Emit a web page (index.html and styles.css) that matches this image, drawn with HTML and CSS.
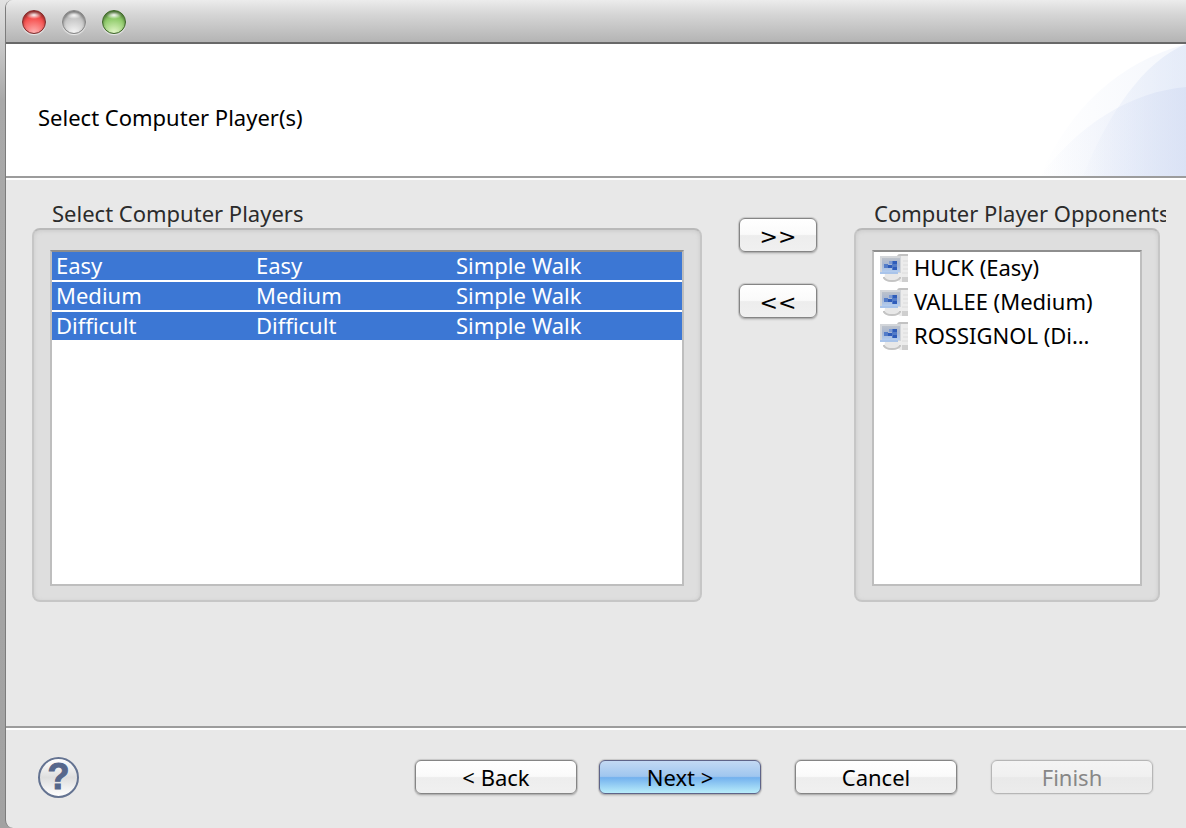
FILE: index.html
```html
<!DOCTYPE html>
<html lang="en">
<head>
<meta charset="utf-8">
<meta name="viewport" content="width=device-width, initial-scale=1">
<title>Select Computer Player(s)</title>
<link rel="stylesheet" href="styles.css">
</head>
<body>
<svg class="defs" aria-hidden="true">
  <defs>
    <linearGradient id="screen" x1="0" y1="0" x2="0" y2="1">
      <stop offset="0" stop-color="#bcc2cb"/>
      <stop offset=".5" stop-color="#a6b6d2"/>
      <stop offset="1" stop-color="#b3cdf0"/>
    </linearGradient>
    <filter id="soft"><feGaussianBlur stdDeviation=".7"/></filter>
    <symbol id="computer" viewBox="0 0 28 28">
      <path d="M18 25V2q0-2 2-2h8v28h-7q-3 0-3-3z" fill="#ececec"/>
      <path d="M18 5V3q0-2 2-2h8" fill="none" stroke="#c2c2c2" stroke-width="2"/>
      <path d="M23 7h5M23 11h5M23 15h5M22 19h6" stroke="#dcdcdc"/>
      <path d="M22 23h6v5h-6z" fill="#cfcfcf"/>
      <path d="M5 20h13l1 5q-1 3-7 3t-8-3z" fill="#e8e8e8"/>
      <path d="M4 23v1q2 3 8 3t8-3v-1" fill="none" stroke="#c4c4c4" stroke-width="2"/>
      <path d="M0 2h21v17H0z" fill="#d3d6da"/>
      <path d="M2 4h18v14H2z" fill="url(#screen)"/>
      <path d="M0 19h18" stroke="#a9c4ea" stroke-width="2"/>
      <g filter="url(#soft)">
        <path d="M4 10h4v4H4zM12 7h5v9h-5z" fill="#527bc8"/>
        <path d="M8 11h4v3H8zM13 7h4v3h-4zM13 13h4v3h-4z" fill="#2f5cba"/>
        <path d="M9 7h3v3H9z" fill="#7d9bd3"/>
      </g>
    </symbol>
  </defs>
</svg>
<div class="window">
  <div class="titlebar">
    <button class="light light-close" type="button" aria-label="Close"></button>
    <button class="light light-minimize" type="button" aria-label="Minimize"></button>
    <button class="light light-zoom" type="button" aria-label="Zoom"></button>
  </div>

  <header class="banner">
    <h1 class="banner-title">Select Computer Player(s)</h1>
    <svg class="banner-art" viewBox="0 0 148 132" aria-hidden="true">
      <defs>
        <linearGradient id="outer" gradientUnits="userSpaceOnUse" x1="0" y1="0" x2="148" y2="0">
          <stop offset="0" stop-color="#dbe4f6" stop-opacity="0"/>
          <stop offset="1" stop-color="#dbe4f6" stop-opacity=".3"/>
        </linearGradient>
        <linearGradient id="inner" gradientUnits="userSpaceOnUse" x1="40" y1="0" x2="148" y2="0">
          <stop offset="0" stop-color="#dbe4f6" stop-opacity="0"/>
          <stop offset=".4" stop-color="#dbe4f6" stop-opacity=".3"/>
          <stop offset="1" stop-color="#dbe4f6" stop-opacity=".6"/>
        </linearGradient>
        <linearGradient id="low" gradientUnits="userSpaceOnUse" x1="0" y1="0" x2="148" y2="0">
          <stop offset="0" stop-color="#d5def4" stop-opacity="0"/>
          <stop offset=".6" stop-color="#d5def4" stop-opacity=".3"/>
          <stop offset="1" stop-color="#d5def4" stop-opacity=".65"/>
        </linearGradient>
      </defs>
      <path d="M2 132Q48 28 148 0V132z" fill="url(#outer)"/>
      <path d="M45 132C70 70 105 18 148 0V132z" fill="url(#inner)"/>
      <path d="M2 132C42 80 92 48 148 43V132z" fill="url(#low)"/>
    </svg>
  </header>

  <main class="content">
    <section class="group" aria-labelledby="players-label">
      <h2 class="group-label" id="players-label">Select Computer Players</h2>
      <div class="well">
        <div class="list">
          <table class="players" aria-labelledby="players-label">
            <colgroup><col class="col-name"><col class="col-level"><col></colgroup>
            <tbody>
              <tr><td>Easy</td><td>Easy</td><td>Simple Walk</td></tr>
              <tr><td>Medium</td><td>Medium</td><td>Simple Walk</td></tr>
              <tr><td>Difficult</td><td>Difficult</td><td>Simple Walk</td></tr>
            </tbody>
          </table>
        </div>
      </div>
    </section>

    <div class="transfer">
      <button class="btn btn-arrows" type="button">&gt;&gt;</button>
      <button class="btn btn-arrows" type="button">&lt;&lt;</button>
    </div>

    <section class="group" aria-labelledby="opponents-label">
      <h2 class="group-label" id="opponents-label">Computer Player Opponents</h2>
      <div class="well">
        <ul class="list opponents">
          <li><svg class="icon" aria-hidden="true"><use href="#computer"/></svg><span>HUCK (Easy)</span></li>
          <li><svg class="icon" aria-hidden="true"><use href="#computer"/></svg><span>VALLEE (Medium)</span></li>
          <li><svg class="icon" aria-hidden="true"><use href="#computer"/></svg><span>ROSSIGNOL (Di…</span></li>
        </ul>
      </div>
    </section>
  </main>

  <footer class="footer">
    <button class="help" type="button" aria-label="Help">?</button>
    <div class="actions">
      <div class="steps">
        <button class="btn btn-wide" type="button">&lt; Back</button>
        <button class="btn btn-wide btn-default" type="button">Next &gt;</button>
      </div>
      <button class="btn btn-wide" type="button">Cancel</button>
      <button class="btn btn-wide" type="button" disabled>Finish</button>
    </div>
  </footer>
</div>
</body>
</html>
```
FILE: styles.css
```css
* {
  box-sizing: border-box;
}

body {
  margin: 0;
  padding-left: 5px;
  background: linear-gradient(#e2e2e2, #a9a9a9 100px, #a2a2a2);
  font-family: "Noto Sans", "Open Sans", sans-serif;
  font-size: 22px;
  line-height: 26px;
  color: #000;
}

.defs {
  position: absolute;
  width: 0;
  height: 0;
}

.window {
  display: flex;
  flex-direction: column;
  min-height: 100vh;
  border-left: 1px solid #7c7c7c;
  border-radius: 8px 0 0 8px;
  background: #e8e8e8;
  overflow: hidden;
}

.titlebar {
  display: flex;
  align-items: center;
  gap: 16px;
  height: 44px;
  padding: 2px 0 0 16px;
  border-bottom: 2px solid #686868;
  background: linear-gradient(#ececec, #d6d6d6 14px, #b4b4b4);
}

.light {
  width: 24px;
  height: 24px;
  padding: 0;
  border: 1px solid #777;
  border-radius: 50%;
  box-shadow: 0 1px 1px #eee, inset 0 2px 3px rgba(0, 0, 0, .4);
}

.light-close {
  border-color: #7f2a2a;
  background: radial-gradient(ellipse 8px 4px at 50% 18%, #fff, transparent), radial-gradient(circle at 50% 100%, #ffb4b4, #f6514f 60%, #c82f2d);
}

.light-minimize {
  border-color: #858585;
  background: radial-gradient(ellipse 8px 4px at 50% 18%, #fff, transparent), radial-gradient(circle at 50% 100%, #f6f6f6, #c6c6c6 60%, #adadad);
}

.light-zoom {
  border-color: #3b6526;
  background: radial-gradient(ellipse 8px 4px at 50% 18%, #fff, transparent), radial-gradient(circle at 50% 100%, #e6f8cc, #8dca68 60%, #5d9a3e);
}

.banner {
  display: flex;
  justify-content: space-between;
  height: 136px;
  padding-left: 32px;
  border-bottom: 2px solid #fff;
  background: #fff;
  box-shadow: inset 0 -2px #9c9c9c;
}

.banner-title {
  margin: 60px 0 0;
  font-size: 22px;
  font-weight: 400;
}

.banner-art {
  width: 148px;
  height: 132px;
}

.content {
  flex: 1;
  display: grid;
  grid-template-columns: minmax(0, 670fr) 78px minmax(0, 306fr);
  align-items: start;
  gap: 37px;
  padding: 20px 26px 124px;
}

.group-label {
  margin: 0 -6px 0 0;
  padding: 0 0 2px 20px;
  overflow: hidden;
  white-space: nowrap;
  font-size: 22px;
  font-weight: 400;
  color: #2b2b2b;
}

.well {
  padding: 20px 16px 14px;
  border: 2px solid #c6c6c6;
  border-top-color: #b9b9b9;
  border-radius: 8px;
  background: #dedede;
  box-shadow: inset 0 1px 4px #cacaca;
}

.list {
  min-height: 336px;
  margin: 0;
  border: 2px solid #bebebe;
  border-top-color: #8e8e8e;
  background: #fff;
}

.players {
  width: 100%;
  table-layout: fixed;
  border-spacing: 0;
  color: #fff;
}

.players td {
  height: 30px;
  padding: 0 4px 2px;
  border-bottom: 2px solid #fff;
  background: #3c77d4;
}

.col-name,
.col-level {
  width: 200px;
}

.transfer {
  display: grid;
  gap: 32px;
  padding-top: 18px;
}

.opponents {
  padding: 0 6px;
  list-style: none;
}

.opponents li {
  display: flex;
  align-items: start;
  gap: 6px;
  height: 34px;
  padding-top: 2px;
  white-space: nowrap;
}

.icon {
  flex: none;
  width: 28px;
  height: 28px;
}

.btn {
  height: 34px;
  padding: 0;
  border: 1px solid #858585;
  border-radius: 6px;
  background: linear-gradient(#fff 0, #fafafa 48%, #ededed 52%, #f0f0f0);
  box-shadow: 0 0 1px 1px rgba(0, 0, 0, .15), 0 2px 2px rgba(0, 0, 0, .12);
  font: inherit;
  line-height: 32px;
  color: #000;
}

.btn-arrows {
  padding-top: 2px;
  font-family: "DejaVu Sans", sans-serif;
}

.btn-wide {
  width: 162px;
}

.btn-default {
  border-color: #5f6488;
  background: linear-gradient(#c3d9f3 0, #9fc6ef 48%, #73b1ee 52%, #b9edfa);
}

.btn:disabled {
  border-color: #b6b6b6;
  background: linear-gradient(#f4f4f4 0, #f0f0f0 48%, #e9e9e9 52%, #ececec);
  box-shadow: 0 0 1px 1px rgba(0, 0, 0, .06);
  color: #878787;
}

.footer {
  display: flex;
  align-items: center;
  justify-content: space-between;
  height: 102px;
  padding: 0 33px 2px 32px;
  border-top: 2px solid #9c9c9c;
  box-shadow: inset 0 2px #fff;
}

.help {
  width: 41px;
  height: 41px;
  padding: 0;
  border: 2px solid #647391;
  border-radius: 50%;
  background: linear-gradient(#fff, #dedede 50%, #fff);
  font: bold 36px/36px "Liberation Sans", sans-serif;
  -webkit-text-stroke: 1px #56678b;
  color: #56678b;
}

.actions {
  display: flex;
  gap: 34px;
}

.steps {
  display: flex;
  gap: 22px;
}
```
